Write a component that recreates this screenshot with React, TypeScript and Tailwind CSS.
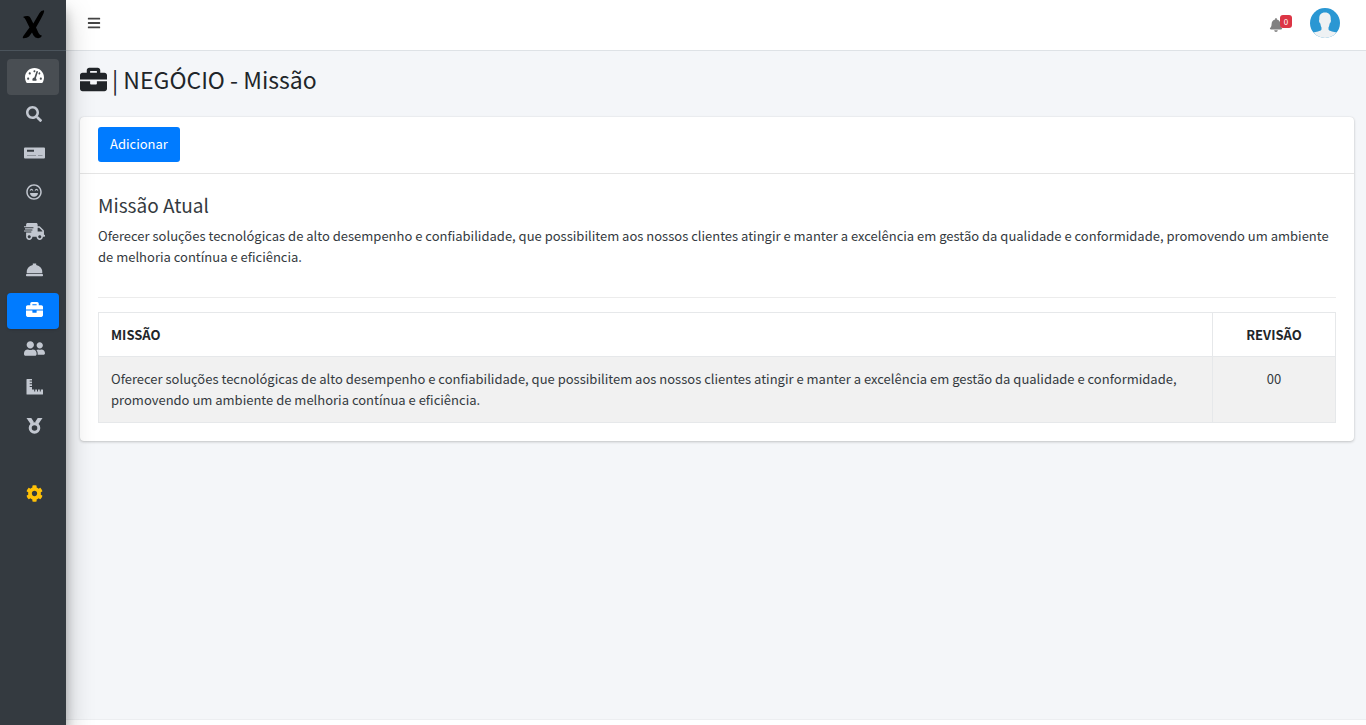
import React from "react";
import {
  FaTachometerAlt,
  FaSearch,
  FaRegLaughBeam,
  FaShippingFast,
  FaBriefcase,
  FaUserFriends,
  FaCog,
  FaBars,
  FaBell,
} from "react-icons/fa";

const MISSION =
  "Oferecer soluções tecnológicas de alto desempenho e confiabilidade, que possibilitem aos nossos clientes atingir e manter a excelência em gestão da qualidade e conformidade, promovendo um ambiente de melhoria contínua e eficiência.";

type IconProps = { className?: string };

function CardIcon({ className }: IconProps) {
  return (
    <svg viewBox="0 0 21 17" className={className} fill="currentColor">
      <path
        fillRule="evenodd"
        d="M1 2.500h19a1 1 0 0 1 1 1V12.500a1 1 0 0 1-1 1H1a1 1 0 0 1-1-1V3.500a1 1 0 0 1 1-1zM3 4.800v2h7v-2z"
      />
      <path d="M3 10.500h9M14 10.500h4.500" stroke="#343a40" strokeWidth="0.600" opacity="0.600" />
    </svg>
  );
}

function ServiceBellIcon({ className }: IconProps) {
  return (
    <svg viewBox="0 0 17 17" className={className} fill="currentColor">
      <path d="M6.800 1.500h3.400v1.400a7.300 7.300 0 0 1 6 8.300H.8a7.300 7.300 0 0 1 6-8.300z" />
      <rect y="11.900" width="17" height="2.300" rx="0.800" />
    </svg>
  );
}

function RulerIcon({ className }: IconProps) {
  return (
    <svg viewBox="0 0 17 17" className={className} fill="currentColor">
      <path d="M1 0h5v1.500H3.700v1h2.300v1.800H3.700v1h2.300v1.800H3.700v1h2.300v2.400h2.200v2h1v-2H11v2h1v-2h1.800v2h1v-2H17v4.500a.5.500 0 0 1-.5.500H1a.5.500 0 0 1-.5-.5V.5A.5.500 0 0 1 1 0z" />
    </svg>
  );
}

function MedalIcon({ className }: IconProps) {
  return (
    <svg viewBox="0 0 17 17" className={className}>
      <path d="M.5 0h4.800l2.700 4.300-3.100 2.200zM16.500 0h-4.800L9 4.300l3.100 2.200z" fill="currentColor" />
      <circle cx="8.500" cy="10" r="4.300" fill="none" stroke="currentColor" strokeWidth="3" />
    </svg>
  );
}

const NAV = [
  { label: "Painel", icon: FaTachometerAlt, size: "h-[17px] w-[19px]", tone: "bg-[#494e53] text-white" },
  { label: "Pesquisar", icon: FaSearch, size: "size-4", tone: "text-[#c2c7d0]" },
  { label: "Cadastro", icon: CardIcon, size: "h-[17px] w-[21px]", tone: "text-[#c2c7d0]" },
  { label: "Clientes", icon: FaRegLaughBeam, size: "size-4", tone: "text-[#c2c7d0]" },
  { label: "Fornecedores", icon: FaShippingFast, size: "h-[17px] w-[21px]", tone: "text-[#c2c7d0]" },
  { label: "Serviços", icon: ServiceBellIcon, size: "size-[17px]", tone: "text-[#c2c7d0]" },
  { label: "Negócio", icon: FaBriefcase, size: "size-[17px]", tone: "bg-[#007bff] text-white shadow" },
  { label: "Pessoas", icon: FaUserFriends, size: "h-[17px] w-[21px]", tone: "text-[#c2c7d0]" },
  { label: "Medição", icon: RulerIcon, size: "size-[17px]", tone: "text-[#c2c7d0]" },
  { label: "Qualidade", icon: MedalIcon, size: "size-[17px]", tone: "text-[#c2c7d0]" },
];

function Sidebar() {
  return (
    <aside className="z-10 flex w-[66px] shrink-0 flex-col bg-[#343a40] shadow-[0_14px_28px_rgba(0,0,0,0.25),0_10px_10px_rgba(0,0,0,0.22)]">
      <a
        href="#"
        aria-label="Início"
        className="flex h-[51px] items-center justify-center border-b border-[#4b545c]"
      >
        <svg viewBox="0 0 24 30" className="h-[30px] w-6" fill="#000">
          <path d="M2 7Q4 5.800 7 6Q9 6.200 9.800 8.500L12.300 13.500L18.500 3Q20 .5 23 .3Q23.500 1 22.500 3.500Q20 9 15 17.500L17.500 23Q18.500 25 21 25.800Q20 28.300 17 28.200Q14 28 12.500 25.500L11 22.500L8 26.500Q6 28.500 2 28.300Q1.200 27.500 2.500 25.800L8.500 17.500L4.800 10Q4 8 2 7Z" />
        </svg>
      </a>
      <nav className="flex flex-col gap-[3px] px-[7px] pt-2">
        {NAV.map(({ label, icon: Icon, size, tone }) => (
          <a
            key={label}
            href="#"
            aria-label={label}
            className={"flex h-9 items-center justify-center rounded pb-1 pl-0.5 " + tone}
          >
            <Icon className={size} />
          </a>
        ))}
        <a
          href="#"
          aria-label="Configurações"
          className="mt-7 flex h-9 items-center justify-center rounded pb-1 pl-0.5 text-[#ffc107]"
        >
          <FaCog className="size-[17px]" />
        </a>
      </nav>
    </aside>
  );
}

function Header() {
  return (
    <header className="flex h-[51px] shrink-0 items-center justify-between border-b border-[#dee2e6] bg-white pr-[26px] pb-1 pl-[21px]">
      <button type="button" aria-label="Menu" className="text-[#444]">
        <FaBars size={14} />
      </button>
      <div className="flex items-center gap-[18px]">
        <button type="button" aria-label="Notificações" className="flex items-center text-[#808080]">
          <FaBell size={14} className="mt-1" />
          <span className="mb-1 -ml-[3px] flex h-[13px] w-3 items-center justify-center rounded-[3px] bg-[#dc3545] text-[8px] text-white">
            0
          </span>
        </button>
        <button type="button" aria-label="Perfil">
          <svg viewBox="0 0 30 30" className="size-[30px]">
            <circle cx="15" cy="15" r="15" fill="#2a97d3" />
            <path
              d="M15 4.500C10.500 4.500 9 7.500 9.300 11.500C8.700 12.500 9.300 15 10.300 15.500C10.700 17.500 11 18.500 11.500 19.500V21.500C10.500 23.500 6 23.500 3.500 24.600A15 15 0 0 0 26.500 24.600C24 23.500 19.500 23.500 18.500 21.500V19.500C19 18.500 19.300 17.500 19.700 15.500C20.700 15 21.300 12.500 20.700 11.500C21 7.500 19.500 4.500 15 4.500Z"
              fill="#eef1f3"
            />
          </svg>
        </button>
      </div>
    </header>
  );
}

export default function App() {
  return (
    <div className="flex min-h-screen bg-[#f4f6f9] font-['Noto_Sans_CJK_JP',sans-serif] text-[13px] leading-[21px] text-[#343a40]">
      <Sidebar />
      <div className="flex min-w-0 flex-1 flex-col">
        <Header />
        <main className="flex-1 pr-3 pl-[14px]">
          <h1 className="flex items-center gap-[5px] pt-[11px] pb-[13px] text-[23px] leading-[34px] text-[#212529]">
            <FaBriefcase size={27} />
            <span>| NEGÓCIO - Missão</span>
          </h1>
          <section className="mt-2 rounded bg-white shadow-[0_0_1px_rgba(0,0,0,0.125),0_1px_3px_rgba(0,0,0,0.2)]">
            <div className="border-b border-black/10 px-[18px] pt-[10px] pb-[11px]">
              <button
                type="button"
                className="h-[35px] rounded-[3px] bg-[#007bff] px-3 pb-0.5 text-white"
              >
                Adicionar
              </button>
            </div>
            <div className="px-[18px] pt-[18px] pb-[18px]">
              <h2 className="mb-[7px] text-[19px] leading-[26px]">Missão Atual</h2>
              <p>{MISSION}</p>
              <hr className="mt-[30px] mb-[14px] border-[#ececec]" />
              <table className="w-full border-collapse border border-[#e6e8ea]">
                <thead>
                  <tr className="text-[#212529]">
                    <th className="border border-[#e6e8ea] px-3 py-[11px] text-left">MISSÃO</th>
                    <th className="w-[123px] border border-[#e6e8ea] px-3 py-[11px]">REVISÃO</th>
                  </tr>
                </thead>
                <tbody>
                  <tr className="bg-[#f1f1f1] align-top">
                    <td className="border border-[#e6e8ea] px-3 pt-[11px] pb-3">{MISSION}</td>
                    <td className="border border-[#e6e8ea] px-3 pt-[11px] pb-3 text-center">00</td>
                  </tr>
                </tbody>
              </table>
            </div>
          </section>
        </main>
        <footer className="h-[6px] border-t border-[#eceef1] bg-white" />
      </div>
    </div>
  );
}
